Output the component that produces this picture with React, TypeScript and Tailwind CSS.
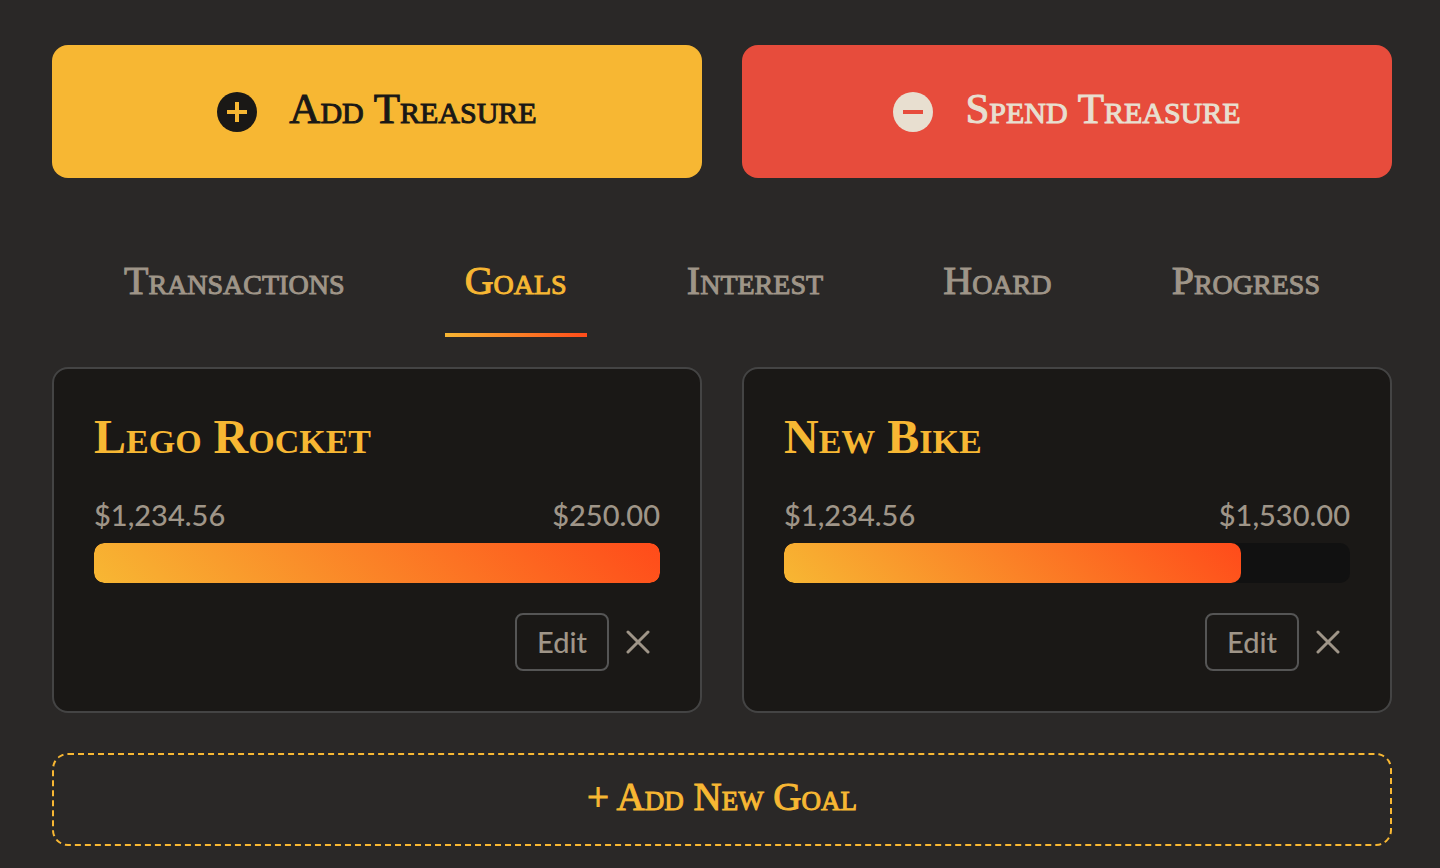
import { useState } from "react";

type Goal = {
  id: number;
  name: string;
  saved: number;
  target: number;
};

const TABS = ["Transactions", "Goals", "Interest", "Hoard", "Progress"];

const GOALS: Goal[] = [
  { id: 1, name: "Lego Rocket", saved: 1234.56, target: 250 },
  { id: 2, name: "New Bike", saved: 1234.56, target: 1530 },
];

const formatMoney = (amount: number) =>
  amount.toLocaleString("en-US", { style: "currency", currency: "USD" });

function PlusCircle() {
  return (
    <svg className="size-10" viewBox="0 0 40 40" aria-hidden="true">
      <circle cx="20" cy="20" r="20" fill="#1a1816" />
      <path d="M10 20h20M20 10v20" stroke="#f7b733" strokeWidth="4" />
    </svg>
  );
}

function MinusCircle() {
  return (
    <svg className="size-10" viewBox="0 0 40 40" aria-hidden="true">
      <circle cx="20" cy="20" r="20" fill="#e8dfd0" />
      <path d="M10 20h20" stroke="#e74c3c" strokeWidth="4" />
    </svg>
  );
}

function GoalCard({ goal }: { goal: Goal }) {
  const percent = Math.min(100, (goal.saved / goal.target) * 100);

  return (
    <article className="rounded-2xl border-2 border-[#444444] bg-[#1a1816] p-10">
      <h2 className="font-['Liberation_Serif',serif] text-5xl leading-14 font-bold text-[#f7b733] [font-variant-caps:small-caps]">
        {goal.name}
      </h2>
      <div className="mt-[30px] flex justify-between text-[29px] leading-10 font-medium text-[#9f9588]">
        <span>{formatMoney(goal.saved)}</span>
        <span>{formatMoney(goal.target)}</span>
      </div>
      <div className="mt-2 h-10 overflow-hidden rounded-[10px] bg-[#111111]">
        <div
          className="h-full rounded-[10px] bg-[linear-gradient(45deg,#f7b733,#ff4b1a)]"
          style={{ width: `${percent}%` }}
        />
      </div>
      <div className="mt-[30px] flex items-center justify-end gap-[7px]">
        <button
          type="button"
          className="h-[58px] rounded-lg border-2 border-[#555555] px-5 text-[29px] font-medium text-[#9f9588]"
        >
          Edit
        </button>
        <button
          type="button"
          aria-label="Delete goal"
          className="flex h-[58px] w-11 items-center justify-center text-[#9f9588]"
        >
          <svg className="size-6" viewBox="0 0 24 24" aria-hidden="true">
            <path
              d="M2 2l20 20M22 2L2 22"
              stroke="currentColor"
              strokeWidth="3"
              strokeLinecap="round"
            />
          </svg>
        </button>
      </div>
    </article>
  );
}

function App() {
  const [activeTab, setActiveTab] = useState("Goals");

  return (
    <main className="min-h-screen bg-[#2a2827] pt-[45px] pr-12 pb-[22px] pl-[52px] font-[Lato,sans-serif]">
      <div className="grid grid-cols-2 gap-10 font-['Liberation_Serif',serif] text-[43px] [font-variant-caps:small-caps] [-webkit-text-stroke:1px]">
        <button
          type="button"
          className="flex h-[133px] items-center justify-center gap-8 rounded-2xl bg-[#f7b733] text-[#1a1816]"
        >
          <PlusCircle />
          <span className="pb-1">Add Treasure</span>
        </button>
        <button
          type="button"
          className="flex h-[133px] items-center justify-center gap-8 rounded-2xl bg-[#e74c3c] text-[#e8dfd0]"
        >
          <MinusCircle />
          <span className="pb-1">Spend Treasure</span>
        </button>
      </div>

      <nav className="mt-[50px] flex justify-between px-[52px] font-['Liberation_Serif',serif] text-[40px] [font-variant-caps:small-caps] [-webkit-text-stroke:1px]">
        {TABS.map((tab) => (
          <button
            key={tab}
            type="button"
            onClick={() => setActiveTab(tab)}
            className={
              tab === activeTab
                ? "h-[109px] border-b-4 px-5 text-[#f7b733] [border-image:linear-gradient(90deg,#f7b733,#ff4b1a)_1]"
                : "h-[109px] border-b-4 border-transparent px-5 text-[#9f9588]"
            }
          >
            {tab}
          </button>
        ))}
      </nav>

      <section className="mt-[30px] grid grid-cols-2 gap-10">
        {GOALS.map((goal) => (
          <GoalCard key={goal.id} goal={goal} />
        ))}
      </section>

      <button
        type="button"
        className="mt-10 h-[93px] w-full rounded-2xl border-2 border-dashed border-[#f7b733] pb-1 font-['Liberation_Serif',serif] text-[39px] text-[#f7b733] [font-variant-caps:small-caps] [-webkit-text-stroke:1px]"
      >
        + Add New Goal
      </button>
    </main>
  );
}

export default App;
